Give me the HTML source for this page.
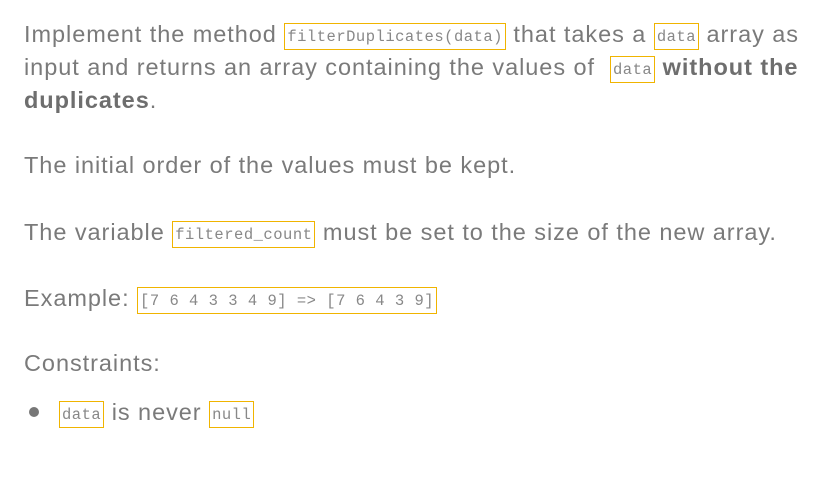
<!DOCTYPE html>
<html><head><style>
body{margin:0;width:827px;height:494px;background:#fff;overflow:hidden;font-family:"Liberation Sans",sans-serif;color:#7a7a7a;font-size:23.5px;letter-spacing:0.95px}
.l{position:absolute;left:24px;white-space:nowrap;line-height:33px;height:33px}
code{font-family:"Liberation Mono",monospace;font-size:15.5px;letter-spacing:0.5px;border:1px solid #f0b400;padding:4px 2px 3px;color:#888;vertical-align:1px}
b{color:#6e6e6e}
.dot{position:absolute;left:29px;top:407px;width:10px;height:10px;border-radius:50%;background:#777}
</style></head><body>
<div class="l" style="top:18px">Implement the method <code>filterDuplicates(data)</code> that takes a <code>data</code> array as</div>
<div class="l" style="top:51px">input and returns an array containing the values of &nbsp;<code>data</code> <b>without the</b></div>
<div class="l" style="top:84px"><b>duplicates</b>.</div>
<div class="l" style="top:149px">The initial order of the values must be kept.</div>
<div class="l" style="top:216px">The variable <code>filtered_count</code> must be set to the size of the new array.</div>
<div class="l" style="top:282px">Example: <code>[7 6 4 3 3 4 9] =&gt; [7 6 4 3 9]</code></div>
<div class="l" style="top:347px">Constraints:</div>
<div class="dot"></div>
<div class="l" style="top:396px;left:59px"><code>data</code> is never <code>null</code></div>
</body></html>
